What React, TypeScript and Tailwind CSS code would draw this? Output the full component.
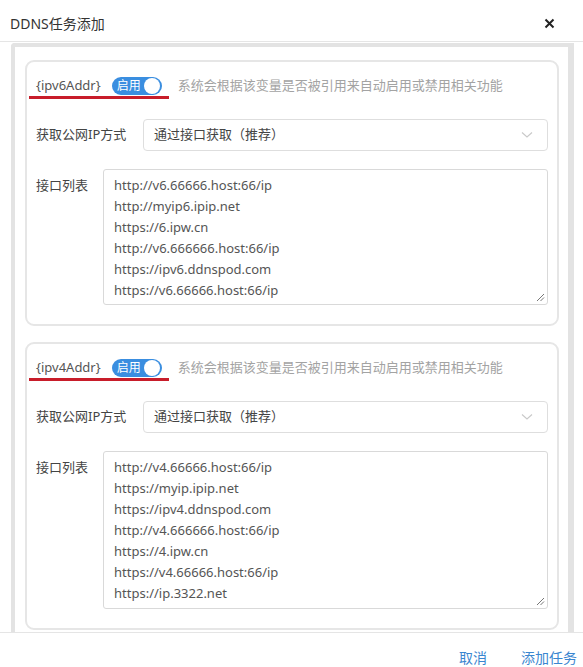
import React from "react";

const font = { fontFamily: '"Noto Sans", "Noto Sans CJK SC", sans-serif' };

function Toggle() {
  return (
    <div className="relative flex h-[18px] w-[50px] items-center rounded-full bg-[#3a8ee0]">
      <span className="pl-[5px] text-[12px] leading-none text-white">启用</span>
      <span className="absolute right-[2px] top-[1px] h-[16px] w-[16px] rounded-full bg-white" />
    </div>
  );
}

function Card({ name, urls, taHeight }: { name: string; urls: string[]; taHeight: string }) {
  return (
    <div className="rounded-[9px] border-2 border-[#e6e6e6] bg-white px-[9px] pb-[19px] pt-[15px]">
      <div className="relative flex h-[18px] items-center">
        <span className="text-[13px] text-[#555]">{name}</span>
        <div className="ml-[11px]">
          <Toggle />
        </div>
        <span className="ml-[16px] text-[13px] text-[#a3a3a3]">系统会根据该变量是否被引用来自动启用或禁用相关功能</span>
        <span className="absolute left-[-7px] top-[19px] h-[3px] w-[140px] bg-[#c81d2a]" />
      </div>
      <div className="mt-[24px] flex items-center">
        <span className="w-[107px] shrink-0 text-[13px] text-[#444]">获取公网IP方式</span>
        <div className="flex h-[32px] flex-1 items-center justify-between rounded-[4px] border border-[#dedede] pl-[10px] pr-[14px]">
          <span className="text-[13px] text-[#444]">通过接口获取（推荐）</span>
          <svg width="12" height="8" viewBox="0 0 12 8" fill="none">
            <path d="M1 1.5 L6 6 L11 1.5" stroke="#c9c9c9" strokeWidth="1.1" />
          </svg>
        </div>
      </div>
      <div className="mt-[18px] flex items-start">
        <span className="w-[67px] shrink-0 pt-[6px] text-[13px] leading-[21px] text-[#444]">接口列表</span>
        <div className={`relative flex-1 rounded-[3px] border border-[#d9d9d9] pl-[10px] pt-[5px] ${taHeight}`}>
          {urls.map((u) => (
            <div key={u} className="text-[13px] leading-[21px] text-[#555]">
              {u}
            </div>
          ))}
          <svg className="absolute bottom-[2px] right-[2px]" width="9" height="9" viewBox="0 0 9 9">
            <path d="M1 8 L8 1 M4.5 8 L8 4.5" stroke="#777" strokeWidth="1" />
          </svg>
        </div>
      </div>
    </div>
  );
}

export default function App() {
  return (
    <div className="flex h-[667px] w-[583px] flex-col overflow-hidden bg-white" style={font}>
      <div className="flex h-[42px] shrink-0 items-center justify-between border-b border-[#e5e5e5] pl-[10px] pr-[28px] pt-[6px]">
        <span className="text-[14px] text-[#333]">DDNS任务添加</span>
        <svg width="11" height="11" viewBox="0 0 11 11">
          <path d="M1.5 1.5 L9.5 9.5 M9.5 1.5 L1.5 9.5" stroke="#222" strokeWidth="2" />
        </svg>
      </div>
      <div className="ml-[11px] mr-[9px] mt-[1px] h-[589px] shrink-0 overflow-hidden rounded-tl-[4px] border-l-4 border-r-[6px] border-t-4 border-[#e3e3e3]">
        <div className="flex flex-col gap-[16px] pl-[10px] pr-[9px] pt-[13px]">
          <Card
            name="{ipv6Addr}"
            taHeight="h-[136px]"
            urls={[
              "http://v6.66666.host:66/ip",
              "http://myip6.ipip.net",
              "https://6.ipw.cn",
              "http://v6.666666.host:66/ip",
              "https://ipv6.ddnspod.com",
              "https://v6.66666.host:66/ip",
            ]}
          />
          <Card
            name="{ipv4Addr}"
            taHeight="h-[158px]"
            urls={[
              "http://v4.66666.host:66/ip",
              "https://myip.ipip.net",
              "https://ipv4.ddnspod.com",
              "http://v4.666666.host:66/ip",
              "https://4.ipw.cn",
              "https://v4.66666.host:66/ip",
              "https://ip.3322.net",
            ]}
          />
        </div>
      </div>
      <div className="flex shrink-0 justify-end gap-[34px] border-t border-[#e5e5e5] pr-[6px] pt-[15px]">
        <span className="text-[14px] leading-[20px] text-[#3a86d0]">取消</span>
        <span className="text-[14px] leading-[20px] text-[#3a86d0]">添加任务</span>
      </div>
    </div>
  );
}
